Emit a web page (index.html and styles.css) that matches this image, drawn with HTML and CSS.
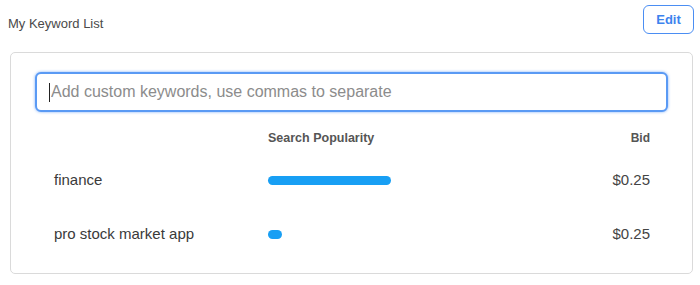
FILE: index.html
```html
<!DOCTYPE html>
<html lang="en">
<head>
  <meta charset="UTF-8" />
  <title>My Keyword List</title>
  <link rel="stylesheet" href="styles.css">
</head>
<body>
  <!-- Header -->
  <div class="list-header">
    <h2>My Keyword List</h2>
    <button class="edit-btn">Edit</button>
  </div>

  <!-- Keyword card -->
  <div class="card">
    <label class="keyword-input">
      <span class="caret"></span>
      <input type="text" placeholder="Add custom keywords, use commas to separate">
    </label>

    <div class="keyword-table">
      <div class="th"></div>
      <div class="th">Search Popularity</div>
      <div class="th bid">Bid</div>

      <div class="keyword">finance</div>
      <div class="pop"><span class="bar" style="width: 123px"></span></div>
      <div class="bid">$0.25</div>

      <div class="keyword">pro stock market app</div>
      <div class="pop"><span class="bar" style="width: 14px"></span></div>
      <div class="bid">$0.25</div>
    </div>
  </div>
</body>
</html>
```

FILE: styles.css
```css
html, body {
  margin: 0;
  padding: 0;
  background: #fff;
  font-family: 'Liberation Sans', Arial, sans-serif;
  color: #444;
}

.list-header {
  display: flex;
  justify-content: space-between;
  align-items: flex-start;
  padding: 5px 6px 0 8px;
  height: 47px;
}

.list-header h2 {
  margin: 11px 0 0;
  font-size: 13px;
  font-weight: normal;
  line-height: 16px;
  color: #4a4a4a;
}

.edit-btn {
  width: 51px;
  height: 29px;
  border: 1.5px solid #4b8ef3;
  border-radius: 6px;
  background: #fff;
  color: #3d83ee;
  font-family: inherit;
  font-size: 13px;
  font-weight: bold;
  padding: 0;
}

.card {
  margin: 0 7px 0 10px;
  height: 222px;
  box-sizing: border-box;
  border: 1px solid #dadada;
  border-radius: 5px;
  padding: 19px 24px 0 24px;
}

.keyword-input {
  position: relative;
  display: block;
}

.keyword-input input {
  display: block;
  width: 100%;
  height: 40px;
  box-sizing: border-box;
  border: 2px solid #5a9af4;
  border-radius: 6px;
  box-shadow: 0 0 3px rgba(70, 140, 245, 0.7);
  padding: 0 0 0 14px;
  font-family: inherit;
  font-size: 16px;
  color: #333;
  outline: none;
}

.keyword-input input::placeholder {
  color: #8c8c8c;
}

.caret {
  position: absolute;
  left: 14px;
  top: 11px;
  width: 1px;
  height: 19px;
  background: #222;
}

.keyword-table {
  display: grid;
  grid-template-columns: 214px 1fr auto;
  grid-template-rows: 16px 54px 54px;
  align-items: center;
  margin-top: 18px;
  padding: 0 18px 0 19px;
}

.th {
  font-size: 12.5px;
  font-weight: bold;
  color: #555;
  line-height: 16px;
}

.keyword {
  font-size: 15px;
  color: #3a3a3a;
  padding-top: 12px;
}

.pop {
  display: flex;
  align-items: center;
  padding-top: 14px;
}

.bar {
  display: block;
  height: 9px;
  border-radius: 5px;
  background: #189ff4;
}

.bid {
  text-align: right;
  font-size: 15px;
  color: #444;
  padding-top: 12px;
}

.th.bid {
  font-size: 12px;
  padding-top: 0;
  color: #555;
}
```
